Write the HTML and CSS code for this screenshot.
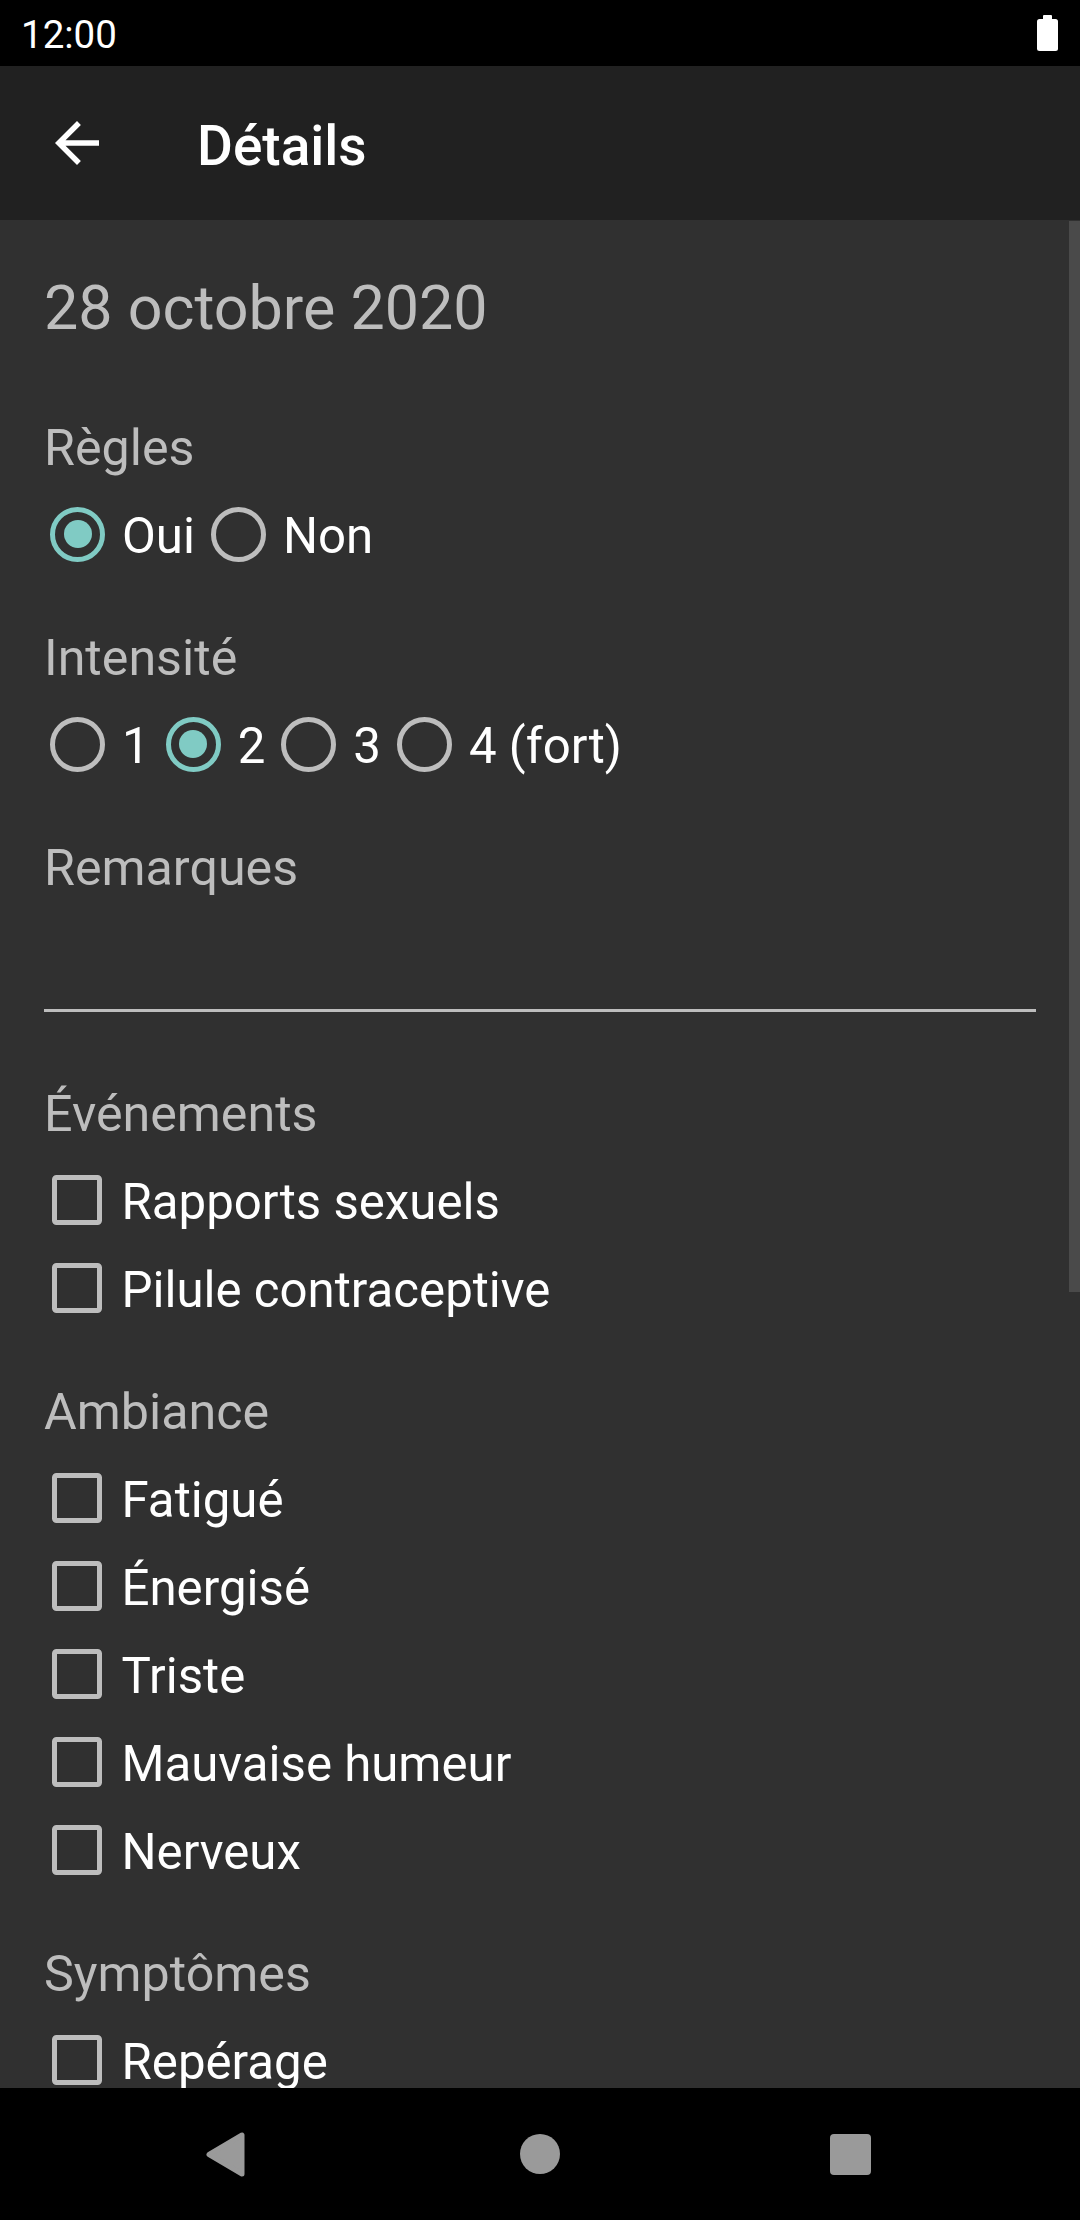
FILE: index.html
```html
<!DOCTYPE html>
<html lang="fr">
<head>
<meta charset="utf-8">
<title>Détails</title>
<link rel="stylesheet" href="styles.css">
</head>
<body>
<div class="status">
  <span class="time">12:00</span>
  <svg class="battery" width="21" height="36" viewBox="0 0 21 36"><rect x="6" y="0" width="9" height="6" rx="1" fill="#fff"/><rect x="0" y="4" width="21" height="32" rx="2.5" fill="#fff"/></svg>
</div>
<div class="appbar">
  <svg class="back" width="66" height="66" viewBox="0 0 24 24"><path d="M20 11H7.830l5.590-5.590L12 4l-8 8 8 8 1.410-1.410L7.830 13H20v-2z" fill="#fff"/></svg>
  <span class="title">Détails</span>
</div>
<div class="content">
  <div class="date">28 octobre 2020</div>

  <div class="label">Règles</div>
  <div class="row radios">
    <div class="radio-item"><span class="radio on"></span><span class="opt">Oui</span></div>
    <div class="radio-item"><span class="radio"></span><span class="opt">Non</span></div>
  </div>

  <div class="label">Intensité</div>
  <div class="row radios">
    <div class="radio-item"><span class="radio"></span><span class="opt">1</span></div>
    <div class="radio-item"><span class="radio on"></span><span class="opt">2</span></div>
    <div class="radio-item"><span class="radio"></span><span class="opt">3</span></div>
    <div class="radio-item"><span class="radio"></span><span class="opt">4 (fort)</span></div>
  </div>

  <div class="label">Remarques</div>
  <div class="input"></div>

  <div class="label">Événements</div>
  <div class="row"><span class="check"></span><span class="opt">Rapports sexuels</span></div>
  <div class="row"><span class="check"></span><span class="opt">Pilule contraceptive</span></div>

  <div class="label">Ambiance</div>
  <div class="row"><span class="check"></span><span class="opt">Fatigué</span></div>
  <div class="row"><span class="check"></span><span class="opt">Énergisé</span></div>
  <div class="row"><span class="check"></span><span class="opt">Triste</span></div>
  <div class="row"><span class="check"></span><span class="opt">Mauvaise humeur</span></div>
  <div class="row"><span class="check"></span><span class="opt">Nerveux</span></div>

  <div class="label">Symptômes</div>
  <div class="row"><span class="check"></span><span class="opt">Repérage</span></div>

  <div class="scrollbar"></div>
</div>
<div class="navbar">
  <svg class="nav-back" width="39" height="45" viewBox="0 0 39 45"><path d="M36 3 L36 42 L3 22.5 Z" fill="#9a9a9a" stroke="#9a9a9a" stroke-width="5" stroke-linejoin="round"/></svg>
  <span class="nav-home"></span>
  <span class="nav-recent"></span>
</div>
</body>
</html>
```
FILE: styles.css
```css
html, body {
  margin: 0;
  padding: 0;
}
body {
  width: 1080px;
  height: 2220px;
  overflow: hidden;
  background: #303030;
  font-family: Roboto, "Noto Sans", sans-serif;
  display: flex;
  flex-direction: column;
}
.status {
  height: 66px;
  flex: 0 0 66px;
  background: #000;
  display: flex;
  align-items: center;
  justify-content: space-between;
  padding: 0 22px 0 21px;
  box-sizing: border-box;
}
.time {
  color: #fff;
  font-size: 38.5px;
  line-height: 62px;
  margin-top: 4px;
}
.battery {
  display: block;
}
.appbar {
  height: 154px;
  flex: 0 0 154px;
  background: #212121;
  display: flex;
  align-items: center;
}
.back {
  display: block;
  margin-left: 44px;
}
.title {
  margin-left: 87px;
  margin-top: 6px;
  color: #fff;
  font-size: 55px;
  font-weight: 500;
  line-height: 64px;
}
.content {
  flex: 1 1 auto;
  position: relative;
  overflow: hidden;
  padding: 48px 44px 0;
  display: flex;
  flex-direction: column;
}
.date {
  font-size: 61px;
  line-height: 80px;
  color: #bdbdbd;
  margin-bottom: 20px;
}
.label {
  font-size: 50.2px;
  line-height: 66px;
  color: #bdbdbd;
  margin: 47px 0 9px;
}
.row {
  height: 88px;
  flex: 0 0 88px;
  display: flex;
  align-items: center;
}
.opt {
  color: #fff;
  font-size: 49.2px;
  line-height: 66px;
  padding-top: 4px;
  white-space: nowrap;
}
.radio-item {
  display: flex;
  align-items: center;
  padding-right: 10px;
}
.radio {
  width: 55px;
  height: 55px;
  box-sizing: border-box;
  border: 5.5px solid #bdbdbd;
  border-radius: 50%;
  margin: 0 17px 0 6px;
  display: flex;
  align-items: center;
  justify-content: center;
}
.radio.on {
  border-color: #80cbc4;
}
.radio.on::after {
  content: "";
  width: 28px;
  height: 28px;
  border-radius: 50%;
  background: #80cbc4;
}
.check {
  width: 49.5px;
  height: 49.5px;
  box-sizing: border-box;
  border: 5.5px solid #bdbdbd;
  border-radius: 4.5px;
  margin: 0 20px 0 8px;
}
.input {
  height: 99px;
  flex: 0 0 99px;
  border-bottom: 3px solid #bdbdbd;
  margin-bottom: 22px;
}
.scrollbar {
  position: absolute;
  right: 0;
  top: 1px;
  width: 11px;
  height: 1071px;
  background: #4a4a4a;
}
.navbar {
  height: 132px;
  flex: 0 0 132px;
  background: #000;
  display: flex;
  align-items: center;
  padding-left: 206px;
  box-sizing: border-box;
}
.nav-back {
  display: block;
}
.nav-home {
  width: 40px;
  height: 40px;
  border-radius: 50%;
  background: #9a9a9a;
  margin-left: 275px;
}
.nav-recent {
  width: 41px;
  height: 41px;
  border-radius: 4px;
  background: #9a9a9a;
  margin-left: 270px;
}
```
